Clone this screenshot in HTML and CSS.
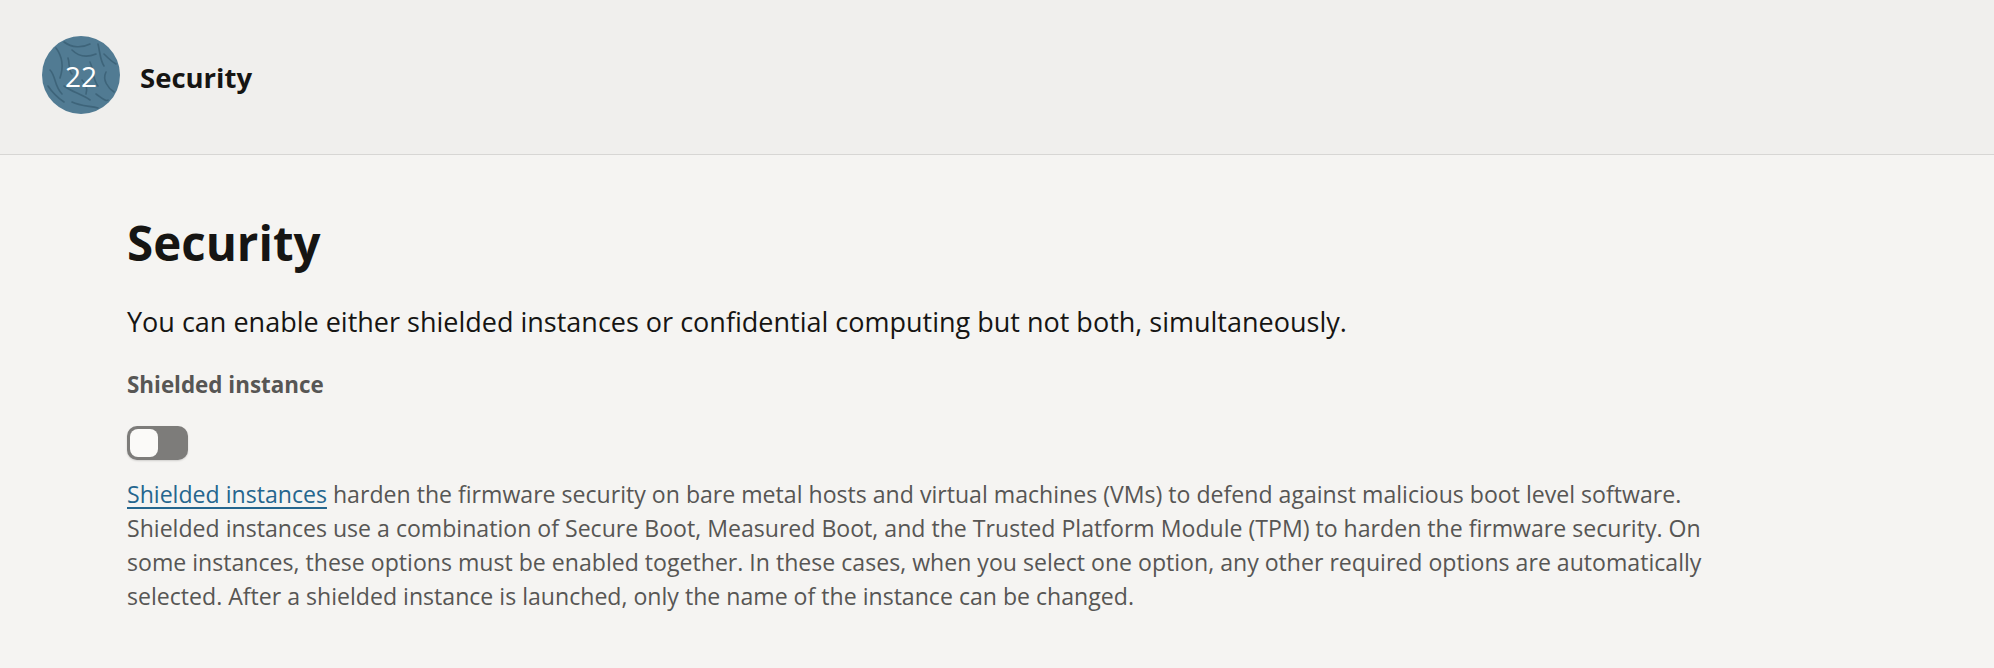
FILE: index.html
```html
<!DOCTYPE html>
<html lang="en">
<head>
<meta charset="utf-8">
<title>Security</title>
<link rel="stylesheet" href="styles.css">
</head>
<body>
<header class="step-header">
  <div class="step-badge">
    <svg class="badge-art" viewBox="0 0 78 78" width="78" height="78" aria-hidden="true">
      <circle cx="39" cy="39" r="39" fill="#517b93"/>
      <g fill="none" stroke="#3b6176" stroke-width="1.6" stroke-linecap="round" opacity="0.85">
        <path d="M14 12 C20 20, 22 30, 18 42"/>
        <path d="M22 6 C30 12, 40 12, 48 8"/>
        <path d="M30 14 C36 20, 44 22, 54 18"/>
        <path d="M56 8 C58 16, 58 24, 62 30"/>
        <path d="M48 26 C52 34, 50 42, 56 50"/>
        <path d="M64 36 C60 44, 66 52, 72 56"/>
        <path d="M8 34 C14 40, 12 50, 20 58"/>
        <path d="M22 50 C30 56, 40 58, 48 64"/>
        <path d="M30 66 C38 70, 48 70, 56 72"/>
        <path d="M54 58 C60 62, 64 66, 66 64"/>
        <path d="M6 50 C10 56, 16 62, 22 66"/>
        <path d="M26 22 C28 28, 26 34, 30 38"/>
        <path d="M62 18 C66 22, 70 26, 74 28"/>
        <path d="M40 44 C44 48, 46 52, 44 58"/>
      </g>
    </svg>
    <span class="badge-num">22</span>
  </div>
  <h2 class="step-title">Security</h2>
</header>
<main class="content">
  <h1 class="page-title">Security</h1>
  <p class="lead">You can enable either shielded instances or confidential computing but not both, simultaneously.</p>
  <div class="field">
    <div class="field-label">Shielded instance</div>
    <div class="switch" role="switch" aria-checked="false"><span class="switch-knob"></span></div>
  </div>
  <p class="help"><a href="#" class="link">Shielded instances</a> harden the firmware security on bare metal hosts and virtual machines (VMs) to defend against malicious boot level software. Shielded instances use a combination of Secure Boot, Measured Boot, and the Trusted Platform Module (TPM) to harden the firmware security. On some instances, these options must be enabled together. In these cases, when you select one option, any other required options are automatically selected. After a shielded instance is launched, only the name of the instance can be changed.</p>
</main>
</body>
</html>
```

FILE: styles.css
```css
html, body {
  margin: 0;
  padding: 0;
}
body {
  background: #f5f4f2;
  font-family: "Open Sans", "Noto Sans", sans-serif;
  color: #161513;
  width: 1994px;
  height: 668px;
  overflow: hidden;
}
.step-header {
  display: flex;
  align-items: center;
  gap: 20px;
  height: 155px;
  box-sizing: border-box;
  padding: 0 0 4px 42px;
  background: #f0efed;
  border-bottom: 1px solid #d7d6d4;
}
.step-badge {
  position: relative;
  width: 78px;
  height: 78px;
  flex: none;
}
.badge-art {
  display: block;
}
.badge-num {
  position: absolute;
  inset: 0;
  display: flex;
  align-items: center;
  justify-content: center;
  color: #ffffff;
  font-size: 28px;
  font-weight: 400;
  line-height: 1;
  padding-top: 1px;
}
.step-title {
  margin: 0;
  padding-top: 6px;
  font-size: 27.5px;
  line-height: 36px;
  font-weight: 700;
  color: #161513;
}
.content {
  padding: 57px 0 0 127px;
}
.page-title {
  margin: 0;
  font-size: 47.5px;
  line-height: 60px;
  font-weight: 700;
  color: #161513;
  padding-top: 1px;
}
.lead {
  margin: 31px 0 0;
  font-size: 27px;
  line-height: 36px;
  color: #161513;
}
.field {
  margin-top: 29px;
  display: flex;
  flex-direction: column;
  align-items: flex-start;
  gap: 25px;
}
.field-label {
  font-size: 22.4px;
  line-height: 32px;
  font-weight: 700;
  color: #575654;
}
.switch {
  width: 61px;
  height: 34px;
  box-sizing: border-box;
  border-radius: 10px;
  background: #7d7c7a;
  padding: 3px;
  box-shadow: 0 1px 2px rgba(0,0,0,0.15);
}
.switch-knob {
  display: block;
  width: 28px;
  height: 28px;
  border-radius: 8px;
  background: #fbfaf8;
}
.help {
  margin: 17px 0 0;
  max-width: 1600px;
  font-size: 23.1px;
  line-height: 34px;
  color: #575654;
}
.link {
  color: #25668e;
  text-decoration: underline;
  text-decoration-thickness: 2px;
  text-underline-offset: 4px;
}
```
